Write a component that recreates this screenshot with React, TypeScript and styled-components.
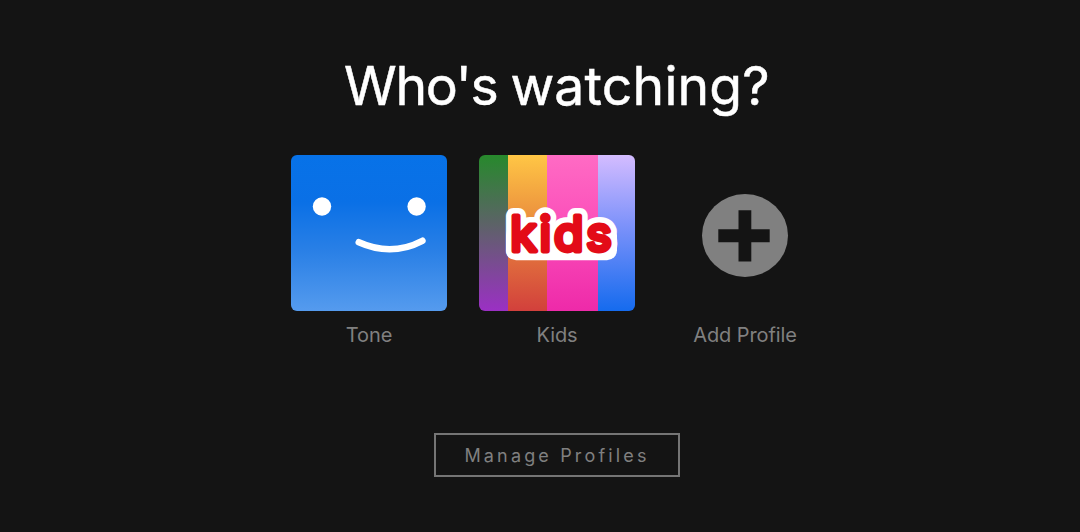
import React from "react";
import styled, { createGlobalStyle } from "styled-components";

type ProfileType = {
  name: string;
  picture: React.ReactNode;
};

const SmileFace = () => (
  <svg viewBox="0 0 156 156" aria-hidden="true">
    <defs>
      <linearGradient id="face" x1="0" y1="0" x2="0" y2="1">
        <stop offset="0" stopColor="#0772e8" />
        <stop offset="0.3" stopColor="#0a70e6" />
        <stop offset="0.62" stopColor="#2a80e6" />
        <stop offset="1" stopColor="#559bee" />
      </linearGradient>
    </defs>
    <rect width="156" height="156" fill="url(#face)" />
    <circle cx="31" cy="51.5" r="9.2" fill="#fff" />
    <circle cx="125.6" cy="51.5" r="9.2" fill="#fff" />
    <path
      d="M67.8 87.3Q100.5 102 131.4 85.8"
      fill="none"
      stroke="#fff"
      strokeWidth="6.6"
      strokeLinecap="round"
    />
  </svg>
);

const stripes = [
  { x: 0, width: 29, colors: ["#27892c", "#5d6268", "#9b30c4"] },
  { x: 29, width: 39, colors: ["#ffc645", "#e98a3d", "#d2403c"] },
  { x: 68, width: 51, colors: ["#ff6bc4", "#fb4fba", "#ee2aa9"] },
  { x: 119, width: 37, colors: ["#d4bcff", "#7d92fa", "#156bee"] },
];

const KidsLogo = () => (
  <svg viewBox="0 0 156 156" role="img" aria-label="kids">
    <defs>
      {stripes.map(({ x, colors }) => (
        <linearGradient key={x} id={`stripe${x}`} x1="0" y1="0" x2="0" y2="1">
          <stop offset="0" stopColor={colors[0]} />
          <stop offset="0.45" stopColor={colors[1]} />
          <stop offset="1" stopColor={colors[2]} />
        </linearGradient>
      ))}
    </defs>
    {stripes.map(({ x, width }) => (
      <rect key={x} x={x} width={width} height="156" fill={`url(#stripe${x})`} />
    ))}
    <rect x="27" y="70" width="111" height="35.3" rx="10" fill="#fff" />
    <KidsText x="31.2" y="95.5" textLength="101.5" className="outline">
      kids
    </KidsText>
    <KidsText x="31.2" y="95.5" textLength="101.5">
      kids
    </KidsText>
  </svg>
);

const PlusCircle = () => (
  <svg viewBox="0 0 156 156" aria-hidden="true">
    <ellipse cx="78" cy="80.5" rx="43" ry="41.5" fill="#808080" />
    <path
      d="M71.5 55.2h12.8v19h18.4v13H84.3v19.2H71.5V87.2H51.3v-13h20.2z"
      fill="#141414"
    />
  </svg>
);

const profiles: ProfileType[] = [
  { name: "Tone", picture: <SmileFace /> },
  { name: "Kids", picture: <KidsLogo /> },
  { name: "Add Profile", picture: <PlusCircle /> },
];

const App = () => {
  return (
    <>
      <GlobalStyle />
      <Container>
        <Title>
          <Word $spacing={-1.3}>Who's</Word>{" "}
          <Word $spacing={0.2}>watching?</Word>
        </Title>
        <ProfileList>
          {profiles.map(({ name, picture }) => (
            <Profile key={name}>
              <Avatar>{picture}</Avatar>
              <Name>{name}</Name>
            </Profile>
          ))}
        </ProfileList>
        <ManageButton type="button">Manage Profiles</ManageButton>
      </Container>
    </>
  );
};

const GlobalStyle = createGlobalStyle`
  * {
    box-sizing: border-box;
  }
  body {
    margin: 0;
    background-color: #141414;
    font-family: Inter, "Liberation Sans", sans-serif;
  }
`;

const Container = styled.main`
  height: 532px;
  padding: 52px 0 0 34px;
  display: flex;
  flex-direction: column;
  align-items: center;
  overflow: hidden;
`;

const Title = styled.h1`
  margin: 0;
  height: 68px;
  line-height: 67px;
  color: #fff;
  font-size: 53.5px;
  font-weight: 400;
  word-spacing: -2.2px;
  white-space: nowrap;
  -webkit-text-stroke: 0.5px #fff;
`;

const Word = styled.span<{ $spacing: number }>`
  letter-spacing: ${({ $spacing }) => $spacing}px;
`;

const ProfileList = styled.ul`
  margin: 34.7px 0 0;
  padding: 0;
  display: flex;
  column-gap: 32px;
  list-style: none;
`;

const Profile = styled.li`
  width: 156px;
  cursor: pointer;
`;

const Avatar = styled.div`
  width: 156px;
  height: 156px;
  border-radius: 6px;
  overflow: hidden;
  svg {
    display: block;
  }
`;

const Name = styled.div`
  margin-top: 12px;
  line-height: 24px;
  color: #808080;
  font-size: 20px;
  letter-spacing: -0.1px;
  text-align: center;
  white-space: nowrap;
`;

const KidsText = styled.text`
  font-family: Inter, sans-serif;
  font-size: 48px;
  font-weight: 400;
  fill: #e30b17;
  stroke: #e30b17;
  stroke-width: 4.8px;
  stroke-linejoin: round;
  &.outline {
    fill: #fff;
    stroke: #fff;
    stroke-width: 16px;
  }
`;

const ManageButton = styled.button`
  width: 246px;
  height: 44px;
  margin-top: 86px;
  padding: 2px 0 0;
  border: 2px solid #757575;
  background-color: transparent;
  color: #808080;
  font-family: inherit;
  font-size: 18px;
  letter-spacing: 3.15px;
  white-space: nowrap;
  cursor: pointer;
`;

export default App;
